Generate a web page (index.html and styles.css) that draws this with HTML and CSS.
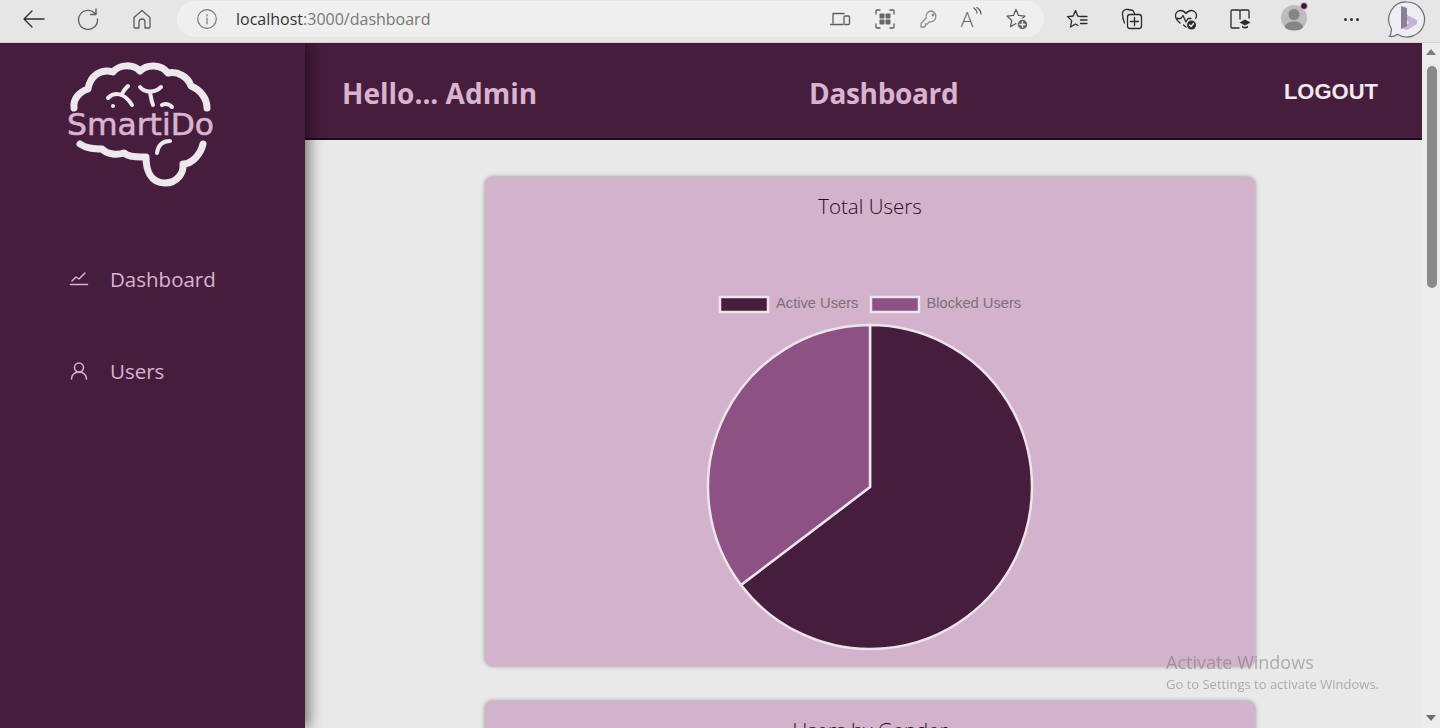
FILE: index.html
```html
<!DOCTYPE html>
<html lang="en">
<head>
    <meta charset="UTF-8">
    <meta name="viewport" content="width=device-width, initial-scale=1.0">
    <title>Dashboard</title>
    <link rel="stylesheet" href="styles.css">
</head>
<body>
    <!-- browser toolbar -->
    <div class="toolbar">
        <div class="slot"><svg class="ico dark" width="26" height="26" viewBox="0 0 26 26"><path d="M23 13H3M11 5l-8 8 8 8"/></svg></div>
        <div class="slot"><svg class="ico" width="26" height="26" viewBox="0 0 26 26"><path d="M20.5 8A9.5 9.5 0 1 0 22.5 13M21 3v5.500h-5.500"/></svg></div>
        <div class="slot"><svg class="ico" width="24" height="24" viewBox="0 0 24 24"><path d="M12 3.500 4 10.500V20a1 1 0 0 0 1 1h4v-6a3 3 0 0 1 6 0v6h4a1 1 0 0 0 1-1v-9.500z"/></svg></div>
        <div class="address">
            <svg class="ico info" width="22" height="22" viewBox="0 0 22 22"><circle cx="11" cy="11" r="9.300"/><path d="M11 10v6M11 6.500v1.500"/></svg>
            <span class="url">localhost<span class="url-rest">:3000/dashboard</span></span>
            <div class="address-icons">
                <div class="slot-sm"><svg class="ico" width="22" height="22" viewBox="0 0 22 22"><path d="M3 15V5.500h11M.5 16.500H13"/><rect x="14" y="8" width="5.500" height="8.500" rx="1"/></svg></div>
                <div class="slot-sm"><svg class="ico" width="24" height="24" viewBox="0 0 24 24"><path d="M3 7V4a1 1 0 0 1 1-1h3M17 3h3a1 1 0 0 1 1 1v3M21 17v3a1 1 0 0 1-1 1h-3M7 21H4a1 1 0 0 1-1-1v-3"/><rect class="solid" x="6.500" y="6.500" width="5" height="5" rx=".8"/><rect class="solid" x="12.500" y="6.500" width="5" height="5" rx=".8"/><rect class="solid" x="6.500" y="12.500" width="5" height="5" rx=".8"/><rect class="solid" x="12.500" y="12.500" width="5" height="5" rx=".8"/></svg></div>
                <div class="slot-sm"><svg class="ico light" width="22" height="22" viewBox="0 0 22 22"><path d="M13.500 3a5.500 5.500 0 0 0-5.300 7L3 15.500V19h3.500l1-1v-2h2l1.700-2.200A5.500 5.500 0 1 0 13.500 3z"/><circle cx="15" cy="7" r=".8"/></svg></div>
                <div class="slot-sm"><span class="read-a">A</span><svg class="ico waves" width="9" height="12" viewBox="0 0 9 12"><path d="M1 1c2 1.500 3 3 3 5M4 .5c2 1.500 4 3.500 4 6.500"/></svg></div>
                <div class="slot-sm"><svg class="ico" width="24" height="24" viewBox="0 0 24 24"><path d="M11 2.500l2.600 5.900 6.400.7-4.800 4.300 1.300 6.300-5.500-3.200-5.500 3.200 1.300-6.300L2 9.100l6.400-.7z"/><circle class="solid badge" cx="17.500" cy="17.500" r="5.500"/><path class="plus" d="M17.500 15v5M15 17.500h5"/></svg></div>
            </div>
        </div>
        <div class="tools">
            <div class="slot"><svg class="ico dark" width="24" height="24" viewBox="0 0 24 24"><path d="M13.500 9.300L11.700 9 9.500 3.500 7.200 9 1.500 9.600l4.200 4-1.200 6.400 5-3 2.500 1.500M14.500 9.500H21M14.500 13H21M14.500 16.500H21"/></svg></div>
            <div class="slot"><svg class="ico dark" width="24" height="24" viewBox="0 0 24 24"><path d="M4.500 16C3.500 14 2.500 9 2.500 6.500 2.500 3.500 5 2 8 2.500l5 1 1.500 3"/><rect x="7.500" y="7.500" width="14" height="14" rx="2.500"/><path d="M14.500 10.500v8M10.500 14.500h8"/></svg></div>
            <div class="slot"><svg class="ico dark" width="24" height="24" viewBox="0 0 24 24"><path d="M6 16C3 13.500 1.500 11 1.500 8.500 1.500 5.500 4 3.500 6.500 3.500c2 0 4 1 5.500 3 1.500-2 3.500-3 5.500-3 2.500 0 5 2 5 5 0 1-.2 2-.8 3M3 11.500h4l2-3 3 6.500 2-3.500h3M9.500 18l2.500 2"/><circle class="solid-dark" cx="17.500" cy="18" r="4.500"/><path class="plus" d="M15.500 18l1.500 1.500 2.500-3"/></svg></div>
            <div class="slot"><svg class="ico dark" width="24" height="24" viewBox="0 0 24 24"><path d="M11 21H4a1 1 0 0 1-1-1V4a1 1 0 0 1 1-1h7c1 0 1 .5 1 1.500V12M12 4.500C12 3.500 12.500 3 13 3h7a1 1 0 0 1 1 1v7"/><path class="solid-dark" d="M17 12.500l5.500 3-5.500 3-5.500-3zM14 18.500c1.500 1.800 4.500 1.800 6 0v2c-1.500 1.300-4.500 1.300-6 0z"/></svg></div>
            <div class="slot">
                <div class="avatar">
                    <svg width="26" height="26" viewBox="0 0 26 26"><circle class="avatar-fill" cx="13" cy="9.500" r="5.500"/><path class="avatar-fill" d="M3.500 24c0-5 4-7.500 9.500-7.500S22.500 19 22.500 24c-2 1.500-17 1.500-19 0z"/></svg>
                    <span class="avatar-dot"></span>
                </div>
            </div>
            <div class="slot dots"><span></span><span></span><span></span></div>
            <div class="slot bing">
                <svg width="40" height="42" viewBox="0 0 40 42"><path class="bing-bubble" d="M20 2a17.500 17.500 0 1 1-9.500 32.200C8 36 5 37 2.500 36.500 4 35 4 32.500 4.500 29A17.500 17.500 0 0 1 20 2z"/><path class="bing-leaf" d="M20 15l10 5v4l-10 6-6-2 8-5-2-3z"/><path class="bing-stem" d="M14 6l6 2v18l-6 3z"/></svg>
            </div>
        </div>
    </div>

    <div class="app">
        <aside class="sidebar">
            <div class="logo">
                <svg width="160" height="135" viewBox="60 55 160 135">
                    <path class="brain" d="M74 108C73 99 79 92 88 89 90 76 101 68 113 72 120 64 133 64 140 71 147 64 161 64 168 73 178 71 188 77 191 86 201 90 207 99 207 108"/>
                    <path class="brain" d="M80 144C87 149 95 149 102 149 108 155 118 155 124 153 130 158 140 157 146 157 146 169 150 183 165 183 177 183 184 173 183 164 193 164 201 153 203 144"/>
                    <path class="brain-thin" d="M108 98C114 92 124 92 132 105M128 86C124 90 122 93 122 95M140 87C145 93 155 93 161 87M150 92C151 97 151 100 153 105M162 105C166 103 169 104 172 107M170 141C162 141 158 146 157 153"/>
                    <circle class="brain-dot" cx="113" cy="106" r="2"/>
                    <text class="logo-text" x="67" y="135" textLength="147" lengthAdjust="spacingAndGlyphs">SmartiDo</text>
                </svg>
            </div>
            <nav class="nav">
                <a class="nav-item">
                    <svg class="nav-icon" width="20" height="20" viewBox="0 0 20 20"><path d="M3 12l4-4 3 2 6-6M1.500 15.500h17"/></svg>
                    Dashboard
                </a>
                <a class="nav-item">
                    <svg class="nav-icon" width="20" height="20" viewBox="0 0 20 20"><circle cx="10" cy="6.500" r="4.500"/><path d="M2.500 18c0-4 3-7 7.500-7s7.500 3 7.500 7"/></svg>
                    Users
                </a>
            </nav>
        </aside>

        <main class="main">
            <header class="header">
                <h2>Hello... Admin</h2>
                <h2 class="page-title">Dashboard</h2>
                <a class="logout">LOGOUT</a>
            </header>
            <div class="content">
                <section class="card">
                    <h3>Total Users</h3>
                    <svg class="chart" width="400" height="370" viewBox="0 0 400 370">
                        <rect class="dark-slice" x="50" y="7" width="48" height="15"/>
                        <text class="legend" x="106" y="18">Active Users</text>
                        <rect class="light-slice" x="201" y="7" width="48" height="15"/>
                        <text class="legend" x="256.500" y="18">Blocked Users</text>
                        <path class="dark-slice" d="M200 197L200 35A162 162 0 1 1 71 295Z"/>
                        <path class="light-slice" d="M200 197L71 295A162 162 0 0 1 200 35Z"/>
                    </svg>
                </section>
                <section class="card">
                    <h3>Users by Gender</h3>
                </section>
            </div>
        </main>

        <div class="scrollbar">
            <span class="arrow-up"></span>
            <span class="thumb"></span>
            <span class="arrow-down"></span>
        </div>
    </div>

    <div class="activate">
        <div class="activate-title">Activate Windows</div>
        <div class="activate-sub">Go to Settings to activate Windows.</div>
    </div>
</body>
</html>
```

FILE: styles.css
```css
html, body {
    margin: 0;
    height: 100%;
    overflow: hidden;
}
body {
    font-family: "Open Sans", "Noto Sans", sans-serif;
    background-color: #e9e9e9;
    display: flex;
    flex-direction: column;
}

/* browser toolbar */
.toolbar {
    height: 42px;
    flex: none;
    display: flex;
    padding-left: 7px;
    background-color: #e6e6e6;
    border-bottom: 1px solid #dccbd8;
    position: relative;
    z-index: 3;
}
.slot {
    width: 54px;
    height: 38px;
    flex: none;
    display: flex;
    align-items: center;
    justify-content: center;
}
.slot-sm {
    width: 44px;
    height: 38px;
    flex: none;
    display: flex;
    align-items: center;
    justify-content: center;
}
.ico {
    fill: none;
    stroke: #5c5c5c;
    stroke-width: 1.3;
    stroke-linecap: round;
    stroke-linejoin: round;
}
.ico.dark {
    stroke: #2b2b2b;
}
.ico.light {
    stroke: #8d8d8d;
}
.ico .solid {
    fill: #666;
    stroke: none;
}
.ico .badge {
    stroke: #efefef;
    stroke-width: 1.500;
}
.ico .solid-dark {
    fill: #2e2e2e;
    stroke: none;
}
.ico .plus {
    stroke: #eee;
    stroke-width: 1.4;
}
.address {
    width: 867px;
    height: 36px;
    margin: 1px 0 0 8px;
    flex: none;
    display: flex;
    align-items: center;
    box-sizing: border-box;
    padding: 0 5px 0 19px;
    background-color: #efefef;
    border-radius: 18px;
}
.info {
    stroke: #777;
    stroke-width: 1.2;
}
.url {
    margin-left: 18px;
    font-size: 16px;
    color: #333;
}
.url-rest {
    color: #777;
}
.address-icons {
    margin-left: auto;
    display: flex;
}
.read-a {
    font-size: 21px;
    color: #666;
    font-weight: 300;
    margin-left: -3px;
}
.waves {
    margin-bottom: 12px;
}
.tools {
    margin-left: 7px;
    display: flex;
}
.tools .slot:nth-child(6) {
    margin-left: 3px;
}
.tools .bing {
    margin-left: 2px;
    align-items: flex-start;
}
.avatar {
    width: 26px;
    height: 26px;
    border-radius: 50%;
    background-color: #bcbcbc;
    position: relative;
    margin-top: -2px;
}
.avatar svg {
    display: block;
    border-radius: 50%;
}
.avatar-fill {
    fill: #858585;
}
.avatar-dot {
    position: absolute;
    top: -3px;
    right: -1px;
    width: 6px;
    height: 6px;
    border-radius: 50%;
    background-color: #4a0f3a;
    border: 1px solid #cfcfcf;
}
.dots {
    gap: 3px;
}
.dots span {
    width: 3px;
    height: 3px;
    border-radius: 50%;
    background-color: #333;
}
.bing-bubble {
    fill: #eeedf1;
    stroke: #6f6a78;
    stroke-width: 1.2;
}
.bing-leaf {
    fill: #c4b1d6;
}
.bing-stem {
    fill: #8a7f96;
}

/* page */
.app {
    flex: 1;
    min-height: 0;
    display: flex;
}
.sidebar {
    width: 305px;
    flex: none;
    background-color: #461d3d;
    box-shadow: 4px 0 13px rgba(0, 0, 0, 0.5);
    position: relative;
    z-index: 2;
}
.logo {
    padding: 12px 0 0 60px;
    height: 135px;
}
.logo svg {
    display: block;
}
.brain {
    fill: none;
    stroke: #ece8ec;
    stroke-width: 7;
    stroke-linecap: round;
    stroke-linejoin: round;
}
.brain-thin {
    fill: none;
    stroke: #ece8ec;
    stroke-width: 4;
    stroke-linecap: round;
}
.brain-dot {
    fill: #ece8ec;
}
.logo-text {
    font-family: "DejaVu Sans", sans-serif;
    font-size: 31px;
    fill: #d8b4d0;
    stroke: #d8b4d0;
    stroke-width: 0.6;
}
.nav {
    margin-top: 74px;
    display: flex;
    flex-direction: column;
    gap: 62px;
}
.nav-item {
    height: 30px;
    display: flex;
    align-items: center;
    gap: 21px;
    padding-left: 69px;
    font-size: 20.500px;
    color: #d8b4d0;
}
.nav-icon {
    fill: none;
    stroke: #d8b4d0;
    stroke-width: 1.500;
    stroke-linecap: round;
    stroke-linejoin: round;
}
.main {
    flex: 1;
    min-width: 0;
    display: flex;
    flex-direction: column;
}
.header {
    height: 91px;
    flex: none;
    display: flex;
    align-items: center;
    gap: 272px;
    padding: 4px 44px 0 37px;
    background-color: #461d3d;
    border-bottom: 2px solid #1f0c1b;
}
.header h2 {
    margin: 0;
    font-size: 28px;
    font-weight: 700;
    color: #d8b4d0;
}
.header .page-title {
    letter-spacing: -0.35px;
}
.logout {
    margin-left: auto;
    margin-top: -2px;
    font-family: "Liberation Sans", Arial, sans-serif;
    font-size: 22px;
    font-weight: 700;
    color: #f0eaef;
}
.content {
    flex: 1;
    min-height: 0;
    overflow: hidden;
    padding: 37px 0 0 180px;
}
.card {
    width: 770px;
    height: 489px;
    box-sizing: border-box;
    margin-bottom: 35px;
    padding-top: 13px;
    background-color: #d3b2cb;
    border-radius: 8px;
    box-shadow: 0 0 4px rgba(0, 0, 0, 0.4);
}
.card h3 {
    margin: 0;
    height: 32px;
    line-height: 32px;
    text-align: center;
    font-size: 20.500px;
    font-weight: 300;
    color: #1f0d1b;
}
.chart {
    display: block;
    margin: 68px auto 0;
}
.dark-slice {
    fill: #461d3d;
    stroke: #ece6ec;
    stroke-width: 2.500;
}
.light-slice {
    fill: #8d5184;
    stroke: #ece6ec;
    stroke-width: 2.500;
}
.legend {
    font-family: "Liberation Sans", Arial, sans-serif;
    font-size: 14.700px;
    fill: #7b6f7c;
}
.scrollbar {
    width: 18px;
    flex: none;
    display: flex;
    flex-direction: column;
    align-items: center;
    background-color: #ececec;
}
.arrow-up {
    margin-top: 6px;
    border: 5px solid transparent;
    border-top: 0;
    border-bottom: 6px solid #7d7d7d;
}
.thumb {
    width: 10px;
    height: 222px;
    margin-top: 11px;
    margin-left: 2px;
    border-radius: 5px;
    background-color: #8a8a8a;
}
.arrow-down {
    margin-top: auto;
    margin-bottom: 7px;
    border: 5px solid transparent;
    border-bottom: 0;
    border-top: 6px solid #6e6e6e;
}

/* watermark */
.activate {
    position: fixed;
    left: 1166px;
    top: 650px;
    color: rgba(110, 110, 110, 0.5);
    pointer-events: none;
    z-index: 3;
}
.activate-title {
    font-size: 18px;
    line-height: 24px;
}
.activate-sub {
    margin-top: 1px;
    font-size: 13px;
    line-height: 18px;
}
```
